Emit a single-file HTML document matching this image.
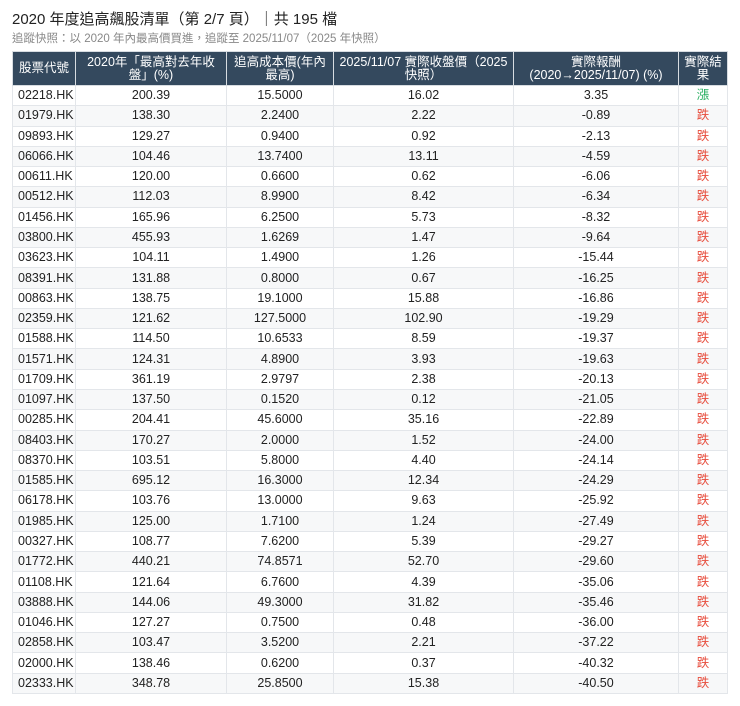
<!DOCTYPE html>
<html><head><meta charset="utf-8"><style>
body{margin:0;background:#fff;font-family:"Liberation Sans","Noto Sans CJK TC",sans-serif;color:#222;}
h1{position:absolute;left:12px;top:8px;margin:0;font-size:15px;font-weight:normal;color:#222;}
.sub{position:absolute;left:12px;top:30px;font-size:11.5px;color:#888;}
table{position:absolute;left:12px;top:51px;width:715px;border-collapse:collapse;table-layout:fixed;font-size:12.5px;}
th{background:#34495e;color:#fff;font-weight:normal;line-height:13px;height:33px;padding:0 2px;border:1px solid #d7dce1;text-align:center;font-size:12.5px;white-space:nowrap;}
td{height:19.27px;padding:0;border:1px solid #e3e6ea;text-align:center;line-height:19px;}
td:first-child{text-align:left;padding-left:5px;}
tbody tr:nth-child(even){background:#f7f8f9;}
.u{color:#27ae60}.d{color:#e74c3c}
</style></head><body>
<h1>2020 年度追高飆股清單（第 2/7 頁）｜共 195 檔</h1>
<div class="sub">追蹤快照：以 2020 年內最高價買進，追蹤至 2025/11/07（2025 年快照）</div>
<table>
<colgroup><col style="width:63px"><col style="width:151px"><col style="width:107px"><col style="width:180px"><col style="width:165px"><col style="width:49px"></colgroup>
<thead><tr><th>股票代號</th><th>2020年「最高對去年收<br>盤」(%)</th><th>追高成本價(年內<br>最高)</th><th>2025/11/07 實際收盤價（2025<br>快照）</th><th>實際報酬<br>(2020→2025/11/07) (%)</th><th>實際結<br>果</th></tr></thead>
<tbody>
<tr><td>02218.HK</td><td>200.39</td><td>15.5000</td><td>16.02</td><td>3.35</td><td class="u">漲</td></tr>
<tr><td>01979.HK</td><td>138.30</td><td>2.2400</td><td>2.22</td><td>-0.89</td><td class="d">跌</td></tr>
<tr><td>09893.HK</td><td>129.27</td><td>0.9400</td><td>0.92</td><td>-2.13</td><td class="d">跌</td></tr>
<tr><td>06066.HK</td><td>104.46</td><td>13.7400</td><td>13.11</td><td>-4.59</td><td class="d">跌</td></tr>
<tr><td>00611.HK</td><td>120.00</td><td>0.6600</td><td>0.62</td><td>-6.06</td><td class="d">跌</td></tr>
<tr><td>00512.HK</td><td>112.03</td><td>8.9900</td><td>8.42</td><td>-6.34</td><td class="d">跌</td></tr>
<tr><td>01456.HK</td><td>165.96</td><td>6.2500</td><td>5.73</td><td>-8.32</td><td class="d">跌</td></tr>
<tr><td>03800.HK</td><td>455.93</td><td>1.6269</td><td>1.47</td><td>-9.64</td><td class="d">跌</td></tr>
<tr><td>03623.HK</td><td>104.11</td><td>1.4900</td><td>1.26</td><td>-15.44</td><td class="d">跌</td></tr>
<tr><td>08391.HK</td><td>131.88</td><td>0.8000</td><td>0.67</td><td>-16.25</td><td class="d">跌</td></tr>
<tr><td>00863.HK</td><td>138.75</td><td>19.1000</td><td>15.88</td><td>-16.86</td><td class="d">跌</td></tr>
<tr><td>02359.HK</td><td>121.62</td><td>127.5000</td><td>102.90</td><td>-19.29</td><td class="d">跌</td></tr>
<tr><td>01588.HK</td><td>114.50</td><td>10.6533</td><td>8.59</td><td>-19.37</td><td class="d">跌</td></tr>
<tr><td>01571.HK</td><td>124.31</td><td>4.8900</td><td>3.93</td><td>-19.63</td><td class="d">跌</td></tr>
<tr><td>01709.HK</td><td>361.19</td><td>2.9797</td><td>2.38</td><td>-20.13</td><td class="d">跌</td></tr>
<tr><td>01097.HK</td><td>137.50</td><td>0.1520</td><td>0.12</td><td>-21.05</td><td class="d">跌</td></tr>
<tr><td>00285.HK</td><td>204.41</td><td>45.6000</td><td>35.16</td><td>-22.89</td><td class="d">跌</td></tr>
<tr><td>08403.HK</td><td>170.27</td><td>2.0000</td><td>1.52</td><td>-24.00</td><td class="d">跌</td></tr>
<tr><td>08370.HK</td><td>103.51</td><td>5.8000</td><td>4.40</td><td>-24.14</td><td class="d">跌</td></tr>
<tr><td>01585.HK</td><td>695.12</td><td>16.3000</td><td>12.34</td><td>-24.29</td><td class="d">跌</td></tr>
<tr><td>06178.HK</td><td>103.76</td><td>13.0000</td><td>9.63</td><td>-25.92</td><td class="d">跌</td></tr>
<tr><td>01985.HK</td><td>125.00</td><td>1.7100</td><td>1.24</td><td>-27.49</td><td class="d">跌</td></tr>
<tr><td>00327.HK</td><td>108.77</td><td>7.6200</td><td>5.39</td><td>-29.27</td><td class="d">跌</td></tr>
<tr><td>01772.HK</td><td>440.21</td><td>74.8571</td><td>52.70</td><td>-29.60</td><td class="d">跌</td></tr>
<tr><td>01108.HK</td><td>121.64</td><td>6.7600</td><td>4.39</td><td>-35.06</td><td class="d">跌</td></tr>
<tr><td>03888.HK</td><td>144.06</td><td>49.3000</td><td>31.82</td><td>-35.46</td><td class="d">跌</td></tr>
<tr><td>01046.HK</td><td>127.27</td><td>0.7500</td><td>0.48</td><td>-36.00</td><td class="d">跌</td></tr>
<tr><td>02858.HK</td><td>103.47</td><td>3.5200</td><td>2.21</td><td>-37.22</td><td class="d">跌</td></tr>
<tr><td>02000.HK</td><td>138.46</td><td>0.6200</td><td>0.37</td><td>-40.32</td><td class="d">跌</td></tr>
<tr><td>02333.HK</td><td>348.78</td><td>25.8500</td><td>15.38</td><td>-40.50</td><td class="d">跌</td></tr>
</tbody></table>
</body></html>
